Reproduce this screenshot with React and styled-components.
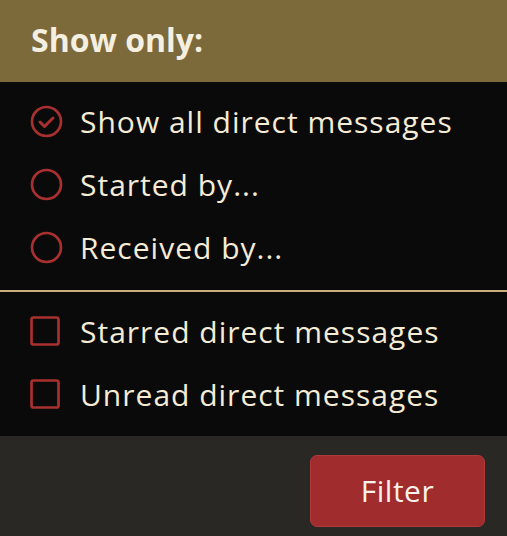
import React from "react";
import styled, { createGlobalStyle } from "styled-components";

const Global = createGlobalStyle`
  html, body { margin: 0; padding: 0; background: #2a2825; }
  body { font-family: "Open Sans", "Noto Sans", sans-serif; }
`;

const Panel = styled.div`
  width: 507px;
  height: 536px;
  display: flex;
  flex-direction: column;
  background: #0a0a0a;
`;

const Header = styled.div`
  height: 82px;
  background: #7d6a3a;
  display: flex;
  align-items: center;
  padding: 0 0 3px 31px;
  box-sizing: border-box;
  color: #f5efe1;
  font-weight: 700;
  font-size: 32px;
`;

const Group = styled.div`
  display: flex;
  flex-direction: column;
  padding: ${(p) => p.$pad};
`;

const Row = styled.label`
  height: 63px;
  display: flex;
  align-items: center;
  gap: 17px;
  padding-left: 30px;
  color: #f5ecd6;
  font-size: 30px;
  letter-spacing: 1px;
  cursor: pointer;
`;

const IconBox = styled.span`
  width: 33px;
  height: 33px;
  display: flex;
  align-items: center;
  justify-content: center;
  flex-shrink: 0;
`;

const Divider = styled.div`
  height: 2px;
  background: #c9b07a;
`;

const Footer = styled.div`
  margin-top: auto;
  height: 100px;
  background: #2a2825;
  display: flex;
  align-items: center;
  justify-content: flex-end;
  padding-right: 22px;
`;

const Button = styled.button`
  width: 175px;
  height: 72px;
  background: #a02c2e;
  border: 1px solid #b0393a;
  border-radius: 7px;
  color: #f7f2ea;
  font-family: inherit;
  font-size: 30px;
  letter-spacing: 0.5px;
  margin-top: 9px;
`;

const RED = "#a8302f";

const Radio = ({ checked }) => (
  <svg width="33" height="33" viewBox="0 0 33 33">
    <circle cx="16.5" cy="16.5" r="14.5" fill="none" stroke={RED} strokeWidth="2.7" />
    {checked && (
      <path d="M10 17 L14.5 21.5 L23 13" fill="none" stroke={RED} strokeWidth="3" strokeLinecap="round" strokeLinejoin="round" />
    )}
  </svg>
);

const Check = () => (
  <svg width="33" height="33" viewBox="0 0 33 33">
    <rect x="1.5" y="2.5" width="27" height="27" rx="2" fill="none" stroke={RED} strokeWidth="2.7" />
  </svg>
);

export default function App() {
  return (
    <>
      <Global />
      <Panel>
        <Header>Show only:</Header>
        <Group $pad="8px 0 11px">
          <Row><IconBox><Radio checked /></IconBox>Show all direct messages</Row>
          <Row><IconBox><Radio /></IconBox>Started by...</Row>
          <Row><IconBox><Radio /></IconBox>Received by...</Row>
        </Group>
        <Divider />
        <Group $pad="8px 0 0">
          <Row><IconBox><Check /></IconBox>Starred direct messages</Row>
          <Row><IconBox><Check /></IconBox>Unread direct messages</Row>
        </Group>
        <Footer><Button>Filter</Button></Footer>
      </Panel>
    </>
  );
}
